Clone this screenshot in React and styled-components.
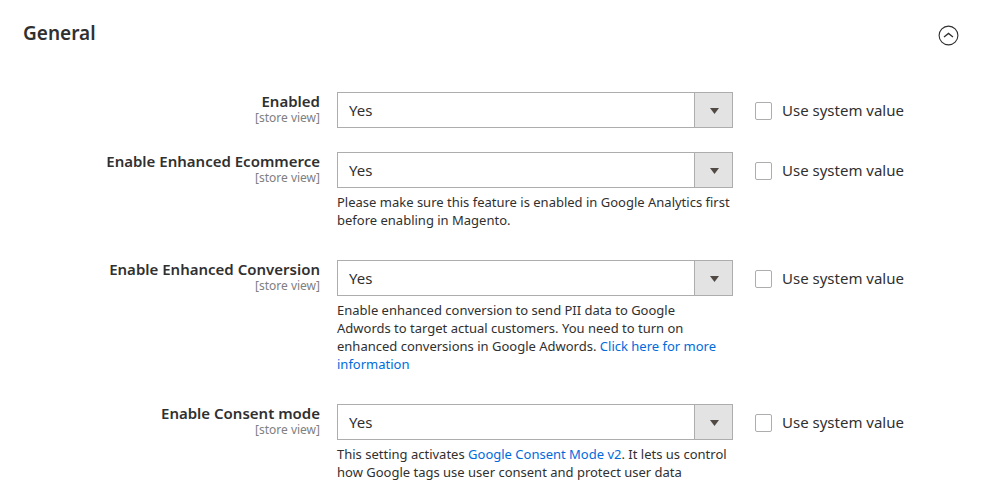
import React, { useState } from "react";
import styled, { createGlobalStyle } from "styled-components";

const GlobalStyle = createGlobalStyle`
  *, *::before, *::after { box-sizing: border-box; }
  body {
    margin: 0;
    background: #fff;
    color: #303030;
    font-family: "Noto Sans", "Open Sans", sans-serif;
    font-size: 15px;
  }
`;

const Page = styled.main`
  padding: 20px 30px 0 23px;
`;

const SectionHeader = styled.header`
  display: flex;
  align-items: flex-start;
  justify-content: space-between;
  height: 72px;
`;

const SectionTitle = styled.h2`
  margin: 0;
  font-size: 19px;
  line-height: 26px;
  font-weight: 600;
`;

const CollapseButton = styled.button`
  display: flex;
  margin-top: 5px;
  padding: 0;
  border: 0;
  background: none;
  color: #303030;
  cursor: pointer;
`;

const Row = styled.div`
  display: grid;
  grid-template-columns: 297px minmax(0, 396px) 1fr;
  column-gap: 17px;
  margin-bottom: 24px;
`;

const RowLabel = styled.label`
  display: flex;
  flex-direction: column;
  text-align: right;
  font-size: 15px;
  line-height: 18px;
  font-weight: 600;
`;

const Scope = styled.span`
  color: #808080;
  font-size: 12px;
  line-height: 16px;
  font-weight: 400;
`;

const SelectFrame = styled.div`
  display: grid;
  grid-template-columns: 1fr 38px;
  height: 36px;
  border: 1px solid #adadad;
`;

const Select = styled.select`
  grid-area: 1 / 1 / 2 / 3;
  width: 100%;
  padding: 0 48px 0 11px;
  border: 0;
  border-radius: 0;
  appearance: none;
  background: #fff;
  color: #303030;
  font-family: inherit;
  font-size: 15px;
`;

const Arrow = styled.span`
  grid-area: 1 / 2;
  display: flex;
  align-items: center;
  justify-content: center;
  z-index: 1;
  padding: 2px 0 0 1px;
  border-left: 1px solid #adadad;
  background: #e3e3e3;
  pointer-events: none;
`;

const Note = styled.p`
  margin: 5px 0 7px;
  padding-right: 2px;
  font-size: 13px;
  line-height: 18px;
`;

const Link = styled.a`
  color: #006bdc;
  text-decoration: none;
`;

const SystemValue = styled.label`
  display: flex;
  align-items: center;
  align-self: start;
  gap: 10px;
  height: 36px;
  padding-left: 5px;
`;

const Checkbox = styled.input`
  appearance: none;
  width: 17px;
  height: 18px;
  margin: 2px 0 0;
  border: 1px solid #adadad;
  border-radius: 2px;
  background: #fff;
  &:checked { background: #514943; }
`;

const settings = [
  { id: "enabled", label: "Enabled" },
  {
    id: "ecommerce",
    label: "Enable Enhanced Ecommerce",
    note: "Please make sure this feature is enabled in Google Analytics first before enabling in Magento.",
  },
  {
    id: "conversion",
    label: "Enable Enhanced Conversion",
    note: (
      <>
        Enable enhanced conversion to send PII data to Google Adwords to target actual customers. You need to turn on
        enhanced conversions in Google Adwords. <Link href="#information">Click here for more information</Link>
      </>
    ),
  },
  {
    id: "consent",
    label: "Enable Consent mode",
    note: (
      <>
        This setting activates <Link href="#consent-mode">Google Consent Mode v2</Link>. It lets us control how Google
        tags use user consent and protect user data
      </>
    ),
  },
];

function Setting({ id, label, note }) {
  return (
    <Row>
      <RowLabel htmlFor={id}>
        {label}
        <Scope>[store view]</Scope>
      </RowLabel>
      <div>
        <SelectFrame>
          <Select id={id} defaultValue="Yes">
            <option>Yes</option>
            <option>No</option>
          </Select>
          <Arrow>
            <svg width="9" height="6" viewBox="0 0 9 6" aria-hidden="true">
              <path d="M0 0h9L4.5 6z" fill="#514943" />
            </svg>
          </Arrow>
        </SelectFrame>
        {note && <Note>{note}</Note>}
      </div>
      <SystemValue>
        <Checkbox type="checkbox" />
        Use system value
      </SystemValue>
    </Row>
  );
}

export default function App() {
  const [open, setOpen] = useState(true);
  return (
    <>
      <GlobalStyle />
      <Page>
        <SectionHeader>
          <SectionTitle>General</SectionTitle>
          <CollapseButton type="button" aria-label="Toggle General" aria-expanded={open} onClick={() => setOpen(!open)}>
            <svg width="21" height="21" viewBox="0 0 21 21" fill="none" stroke="currentColor" aria-hidden="true">
              <circle cx="10.5" cy="10.5" r="9.4" strokeWidth="1.1" />
              <path d="M6 12l4.5-3.6L15 12" strokeWidth="1.3" />
            </svg>
          </CollapseButton>
        </SectionHeader>
        {open && settings.map((s) => <Setting key={s.id} {...s} />)}
      </Page>
    </>
  );
}
